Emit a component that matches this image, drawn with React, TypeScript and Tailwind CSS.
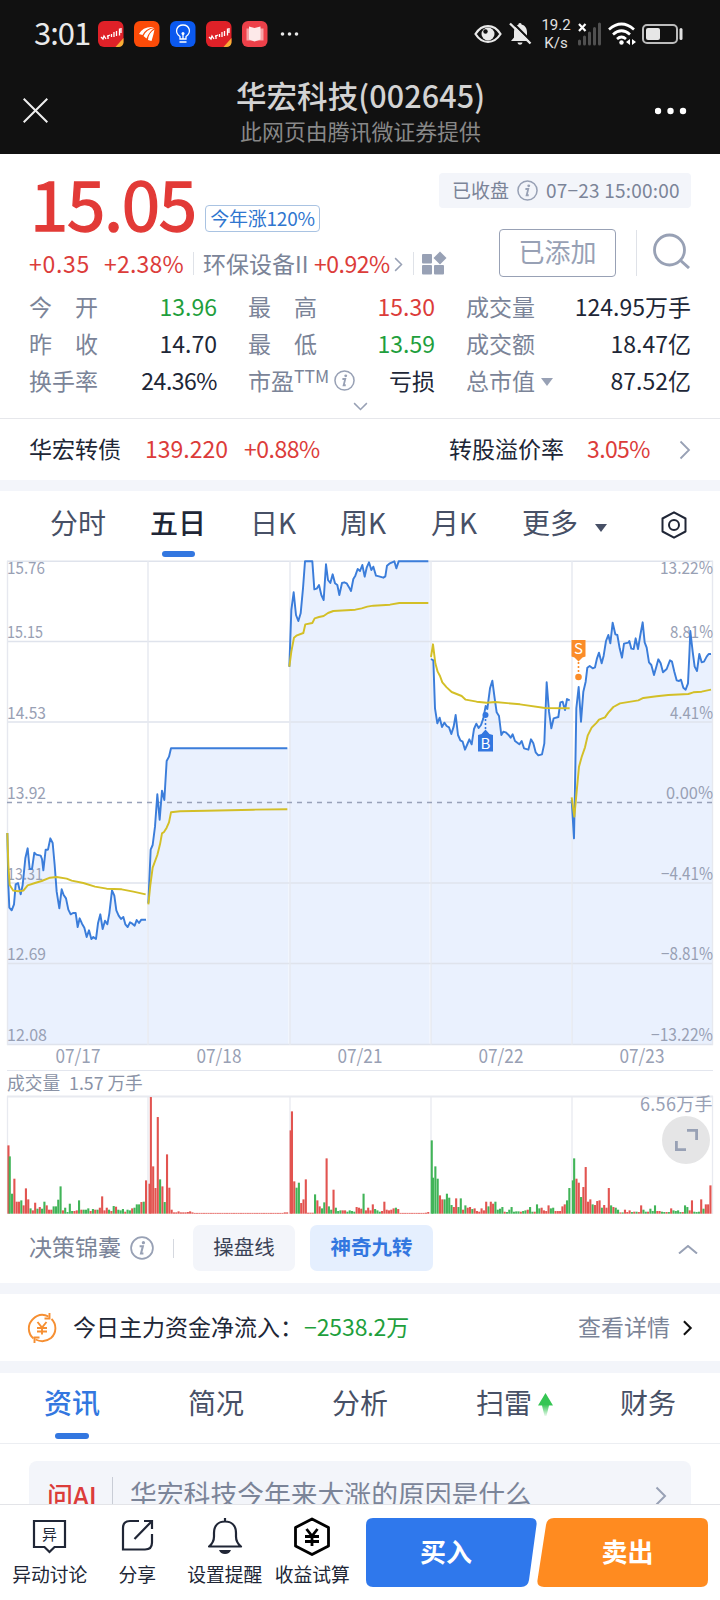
import React from 'react';
import { clsx } from 'clsx';

// Chart coordinates are in thirds of a pixel, relative to each day's own origin
const DAYS = [
  {
    label: '07/17',
    x: 0,
    price:
      '22,834 25,990 28,1058 35,1066 42,1048 47,988 54,984 62,1018 68,990 76,910 83,880 89,942 96,942 103,893 109,899 122,902 126,912 130,946 137,884 144,884 151,850 158,864 164,930 170,1010 178,1060 185,1003 191,1020 198,1030 205,1064 212,1078 219,1074 227,1074 233,1116 239,1090 246,1106 253,1118 260,1146 267,1126 274,1152 280,1146 288,1152 294,1105 301,1078 308,1122 315,1097 322,1108 328,1075 336,1006 343,1022 349,1066 356,1082 363,1092 370,1086 376,1108 383,1116 390,1102 397,1106 404,1112 410,1095 417,1104 424,1094 438,1094',
    average:
      '22,834 25,930 29,990 40,1007 55,1009 70,1007 83,991 105,984 125,978 150,968 170,966 200,971 215,977 250,984 285,995 320,1001 365,1003 400,1010 437,1018',
    volume:
      '205r 172g 60g 105r 36r 36r 40g 25r 76r 43r 16g 10r 33r 15g 20r 15g 36g 25r 12r 12r 22g 22g 42g 82g 10r 18g 5g 30g 8g 8r 10r 40g 12r 12g 12g 16g 8r 14g 12r 12g 18r 52r 10r 18r 12g 8r 23g 21r 12g 10g 14g 6r 12g 10g 16r 18g 28g 28g 35r 36g 100r',
  },
  {
    label: '07/18',
    x: 0,
    price:
      '445,1045 452,884 458,870 465,815 472,718 479,794 486,707 493,735 500,618 507,605 513,580 862,580',
    average:
      '445,1048 451,990 458,938 472,900 480,868 486,835 492,831 500,818 507,802 513,772 540,769 620,767 760,764 862,763',
    volume:
      '90r 350r 142r 77r 290r 103g 82r 35g 178r 78r 12r 4r 4r 7r 4r 4r 4r 5r 7r 4r 2r 2r 2r 1r 1r 1r 1r 1r 1r 1r 2r 2r 2r 2r 2r 1r 1r 1r 1r 1r 1r 1r 1r 1r 1r 2r 1r 1r 1r 1r 2r 1r 1r 1r 1r 2r 1r 1r 1r 4r 4r',
  },
  {
    label: '07/21',
    x: 840,
    price:
      '28,335 34,165 41,112 48,180 55,198 62,175 69,100 75,19 97,19 103,103 110,101 117,90 124,120 131,135 138,28 144,75 151,84 158,58 165,85 172,90 178,120 186,84 193,82 200,85 206,95 213,108 220,72 226,62 233,42 240,48 247,30 254,65 260,38 267,22 274,45 280,35 288,62 297,64 310,68 316,64 321,32 328,26 343,19 349,40 356,19 445,19',
    average:
      '28,335 34,290 42,248 49,242 70,234 76,208 97,204 104,190 117,186 131,183 144,174 160,168 226,164 245,160 262,155 280,152 330,149 358,144 445,144',
    volume:
      '250r 307r 97r 78g 93g 32r 43r 103r 3r 3r 3r 58g 40r 22r 16g 34g 166r 22g 12g 72r 18g 8g 10g 10r 10r 6g 10g 8g 6g 20r 18r 15r 60g 10r 18r 10r 28r 14g 10g 6g 8r 36r 12r 10r 12r 16r 18g 14r 2r 1r 1r 1r 1r 1r 1r 1r 1r 1r 1r 3r 5r',
  },
  {
    label: '07/22',
    x: 1260,
    price:
      '33,312 40,316 45,460 52,505 59,488 66,516 73,503 80,513 87,517 94,537 101,515 107,480 114,540 121,556 128,560 135,584 141,570 148,553 155,568 162,522 169,506 176,519 183,510 190,490 197,453 202,462 210,400 217,377 224,430 230,472 237,483 244,540 250,530 257,532 265,539 272,548 278,538 285,558 298,568 305,558 312,580 325,584 333,553 340,565 347,592 355,601 366,598 373,565 380,382 387,470 394,520 401,490 415,486 421,442 428,440 435,465 441,432 449,436',
    average:
      '33,306 39,268 46,325 53,350 60,363 67,382 80,397 95,411 110,417 125,423 137,434 170,440 200,443 225,441 300,448 375,459 449,460',
    volume:
      '220g 108g 142g 105g 55r 43r 43g 60g 48g 26g 20r 46r 20g 46g 12r 25g 18r 20r 14g 16r 8r 6r 16r 10r 36r 22g 36r 30r 36g 12g 15g 20g 6r 5g 12g 20g 6g 7g 7g 6r 8g 10g 12r 20g 6g 6r 28g 16g 18r 10r 8r 25r 16g 18g 8r 8r 8r 22r 28r 40g 77g',
  },
  {
    label: '07/23',
    x: 1260,
    price:
      '455,735 462,850 466,640 469,460 476,396 483,500 490,410 497,380 502,338 509,333 518,340 525,337 531,310 537,293 545,325 551,302 558,258 565,240 571,265 578,203 586,238 592,240 599,280 606,308 612,266 625,263 628,258 634,281 641,282 647,250 654,282 661,240 668,202 674,262 680,278 687,322 694,330 702,360 709,335 715,313 722,325 729,352 740,342 750,316 756,320 763,350 770,376 777,378 783,374 790,398 797,404 804,385 808,300 811,228 818,290 824,335 831,348 838,297 845,322 852,320 860,305 866,297 873,297',
    average:
      '455,727 463,785 470,710 477,635 485,606 495,577 503,542 515,518 530,503 537,494 555,487 565,473 580,456 600,445 655,436 670,429 710,424 745,420 805,417 820,412 845,410 873,404',
    volume:
      '100g 166g 105r 93r 50g 80r 140r 36r 43r 28g 26r 38r 40r 18g 26r 18r 77r 25g 20r 18g 12g 4r 4g 12r 5r 10r 5g 6r 6g 5r 25r 12g 6g 6r 15g 8g 25g 8r 8r 6g 5g 5r 5g 16r 10g 8g 10g 5g 5r 25g 20g 10r 40r 6g 5g 6g 43r 15g 28r 28r 85r',
  },
];

const GRID_X = [7.5, 148, 290, 431, 572, 712.5];
const PRICES = ['15.76', '15.15', '14.53', '13.92', '13.31', '12.69', '12.08'];
const PRICE_WIDTHS = [38, 36, 39, 39, 36, 39, 40];
const PERCENTS = ['13.22%', '8.81%', '4.41%', '0.00%', '−4.41%', '−8.81%', '−13.22%'];
const PERCENT_WIDTHS = [53, 43, 43, 47, 52, 52, 62];
const LABEL_Y = [574, 638, 719, 799, 880, 960, 1041];

function areaPath(points: string) {
  const list = points.split(' ');
  const first = list[0].split(',')[0];
  const [lastX, lastY] = list[list.length - 1].split(',');
  const end = Number(lastX) + 4;
  return `${first},1467 ${points} ${end},${lastY} ${end},1467`;
}

function PriceChart() {
  return (
    <svg className="block" width="720" height="516" viewBox="0 555 720 516">
      {DAYS.map((d) => (
        <polygon key={d.label} points={areaPath(d.price)} fill="#eaf1fe" transform={`translate(${d.x / 3} 555) scale(0.33333)`} />
      ))}
      <g stroke="#dfe3ec" strokeWidth="1.4">
        {[561.3, 641.5, 722, 883, 963.5, 1044.5].map((y) => (
          <line key={y} x1="7" x2="713" y1={y} y2={y} />
        ))}
        {GRID_X.map((x) => (
          <line key={x} x1={x} x2={x} y1="561" y2="1045" stroke="#e6e8ef" />
        ))}
      </g>
      <line x1="7" x2="713" y1="802.5" y2="802.5" stroke="#98a1b8" strokeWidth="1.6" strokeDasharray="5 5" />
      <line x1="7" x2="713" y1="1071" y2="1071" stroke="#e3e6ee" strokeWidth="2" />

      <g fill="#98a0b4" fontSize="16.6">
        {PRICES.map((p, i) => (
          <text key={p} x="7" y={LABEL_Y[i]} textLength={PRICE_WIDTHS[i]} lengthAdjust="spacingAndGlyphs">{p}</text>
        ))}
        {PERCENTS.map((p, i) => (
          <text key={p} x={713 - PERCENT_WIDTHS[i]} y={LABEL_Y[i]} textLength={PERCENT_WIDTHS[i]} lengthAdjust="spacingAndGlyphs">{p}</text>
        ))}
        {DAYS.map((d, i) => (
          <text key={d.label} x={78 + i * 141} y="1063" fontSize="18.5" textAnchor="middle" textLength="45" lengthAdjust="spacingAndGlyphs">{d.label}</text>
        ))}
      </g>

      {DAYS.map((d) => (
        <g key={d.label} transform={`translate(${d.x / 3} 555) scale(0.33333)`} fill="none" strokeWidth="5.8" strokeLinejoin="round">
          <polyline points={d.price} stroke="#3b7dda" />
          <polyline points={d.average} stroke="#d3bf27" />
        </g>
      ))}

      {/* trade markers */}
      <circle cx="485.5" cy="715" r="3" fill="#3377e0" />
      <path d="M485.5 719v11" stroke="#3377e0" strokeWidth="1.6" strokeDasharray="2 2" />
      <path d="M478 735l3.5-1 4-4.5 4 4.5 3.5 1v16.500h-15z" fill="#3377e0" />
      <text x="485.5" y="749" fill="#fff" fontSize="15" textAnchor="middle">B</text>
      <path d="M571.5 640h14v16.500l-3 1-4 4-4-4-3-1z" fill="#fb8c28" />
      <text x="578.5" y="654" fill="#fff" fontSize="15" textAnchor="middle">S</text>
      <path d="M578.5 662v11" stroke="#fb8c28" strokeWidth="1.6" strokeDasharray="2 2" />
      <circle cx="578.5" cy="677" r="3.3" fill="#fb8c28" />
    </svg>
  );
}

function VolumeChart() {
  return (
    <svg className="block" width="720" height="119" viewBox="0 1095 720 119">
      <line x1="7" x2="713" y1="1096.5" y2="1096.5" stroke="#e8eaf0" strokeWidth="2" />
      {GRID_X.map((x) => (
        <line key={x} x1={x} x2={x} y1="1096" y2="1214" stroke="#e8eaf0" strokeWidth="1.3" />
      ))}
      {DAYS.map((d, day) =>
        d.volume.split(' ').map((v, i) => {
          const h = Math.max(parseInt(v, 10) / 3, 0.8);
          const x = 7.4 + day * 141.1 + i * 2.31 - (i ? 1 : 0);
          return (
            <rect key={`${day}-${i}`} x={x} y={1213.7 - h} width="2.1" height={h} fill={v.endsWith('r') ? '#e25450' : '#41b458'} />
          );
        }),
      )}
      <text x="712.5" y="1110.5" fill="#98a0b4" fontSize="18" textAnchor="end" textLength="72.5">6.56万手</text>
    </svg>
  );
}

function InfoIcon({ className }: { className?: string }) {
  return (
    <svg className={className} viewBox="0 0 22 22" fill="none">
      <circle cx="11" cy="11" r="10" stroke="#98a1b5" strokeWidth="1.6" />
      <circle cx="12.3" cy="6.1" r="1.5" fill="#98a1b5" />
      <path d="M8.8 9.4h3l-1.700 6.600h2.200" stroke="#98a1b5" strokeWidth="1.900" />
    </svg>
  );
}

function Chevron({ className, color = '#98a1b5', width = 2 }: { className?: string; color?: string; width?: number }) {
  return (
    <svg className={className} viewBox="0 0 12 20" fill="none">
      <path d="M1.5 1.5L10 10l-8.500 8.500" stroke={color} strokeWidth={width} />
    </svg>
  );
}

function StockApp() {
  return (
    <svg className="size-[26px]" viewBox="0 0 26 26">
      <rect width="25.5" height="26" rx="6" fill="#df2128" />
      <path d="M25.5 17v5q-1 4-5 4h-3z" fill="#f9ae35" />
      <path d="M3 16l2 2 1-3 2 3M9 15.500l3-1.500M10 14v4M13.500 13v3M16 11v5M18.500 10v5M21.500 7.500v7M23 7v5" stroke="#fff" strokeWidth="1.3" fill="none" />
    </svg>
  );
}

function StatusBar() {
  return (
    <div className="flex h-[68px] items-center pl-[34px]">
      <span className="mt-[-5px] w-[64px] text-[31px] leading-none tracking-[-1px] text-[#e9e9e9]">3:01</span>
      <div className="flex gap-[10px]">
        <StockApp />
        <svg className="size-[26px]" viewBox="0 0 26 26">
          <rect width="25.5" height="26" rx="6" fill="#fc4b08" />
          <path d="M5 13Q9 5 20 6Q11 8 8.500 14zM9.500 15Q12 8.500 20.500 7Q15 10.500 12.500 17.500zM14 19Q14.500 12 20.500 8.500Q19.500 14 17.500 20z" fill="#fff" />
        </svg>
        <svg className="size-[26px]" viewBox="0 0 26 26" fill="none">
          <rect width="25.5" height="26" rx="6" fill="#0b59ef" />
          <path d="M10 18v-2.500c-6-4-3.500-11.500 3-11.500s9 7.500 3 11.500V18zM9.500 21h7M13 13v5" stroke="#fff" strokeWidth="1.3" />
          <circle cx="13" cy="12.5" r="1.5" fill="#fff" />
        </svg>
        <StockApp />
        <svg className="size-[26px]" viewBox="0 0 26 26">
          <rect width="25.5" height="26" rx="6" fill="#ed4049" />
          <path d="M4.5 7.500h17v12h-17z" fill="#f8a3a6" />
          <path d="M7 5.500l5.500 1.500L18.500 5.500v13l-6 2-5.500-2z" fill="#fde9e9" />
        </svg>
      </div>
      <svg className="ml-[12px] h-[26px] w-[20px]" viewBox="0 0 20 26" fill="#e9e9e9">
        <circle cx="2.5" cy="13" r="1.8" />
        <circle cx="9.5" cy="13" r="1.8" />
        <circle cx="16.5" cy="13" r="1.8" />
      </svg>
      <svg className="ml-[174px] h-[24px] w-[28px]" viewBox="0 0 28 24" fill="none">
        <path d="M1.500 12C8 1.500 20 1.500 26.500 12C20 22.500 8 22.500 1.500 12z" stroke="#e9e9e9" strokeWidth="2.200" />
        <circle cx="14" cy="12" r="6.5" fill="#e9e9e9" />
        <circle cx="11.5" cy="9.5" r="2.2" fill="#111" />
      </svg>
      <svg className="ml-[7px] h-[24px] w-[23px]" viewBox="0 0 23 24">
        <path d="M11 1c1.300 0 1.500 1 1.500 1.500 4 1 5.500 4 5.500 8v5l2.500 3.500H2l3-3.500v-5C5 6 7 3.500 9.500 2.500 9.500 2 9.700 1 11 1zM8.500 20.500h5c-.5 3-4.500 3-5 0z" fill="#e9e9e9" />
        <path d="M2 -1L23.500 20.500" stroke="#111" strokeWidth="2.200" />
        <path d="M1 1.500L21.500 21.500" stroke="#e9e9e9" strokeWidth="2.400" />
      </svg>
      <div className="ml-[7px] w-[34px] text-center font-['Roboto'] text-[15px] leading-[18px] text-[#e2e2e2]">
        19.2
        <br />
        K/s
      </div>
      <svg className="ml-[4px] h-[24px] w-[26px]" viewBox="0 0 26 24">
        <path d="M2.500 22v-3M7.500 22v-7M12.500 22v-11M17.500 22V6.500M22.500 22V2" stroke="#505050" strokeWidth="3" strokeLinecap="round" />
        <path d="M2 2l6.500 7M8.500 2L2 9" stroke="#fff" strokeWidth="2.200" />
      </svg>
      <svg className="ml-[5px] h-[24px] w-[28px]" viewBox="0 0 28 24" fill="none">
        <path d="M1 7.500Q13.500-3.500 26 7.500M5 12.500Q13.500 5 22 12.500M9 17Q13.500 13 18 17" stroke="#fff" strokeWidth="2.700" />
        <circle cx="13.500" cy="20.500" r="2.200" fill="#fff" />
        <path d="M22 17v6l-4-3zM24 17v6l4-3z" fill="#fff" />
      </svg>
      <svg className="ml-[6px] h-[24px] w-[42px]" viewBox="0 0 42 24" fill="none">
        <rect x="1" y="3" width="34" height="18" rx="4" stroke="#bcbcbc" strokeWidth="2" />
        <rect x="4" y="6" width="14" height="12" rx="2" fill="#e6e6e6" />
        <path d="M39 7.500v9" stroke="#e0e0e0" strokeWidth="3" strokeLinecap="round" />
      </svg>
    </div>
  );
}

function Header() {
  return (
    <header className="h-[154px] bg-[#111]">
      <StatusBar />
      <div className="flex h-[86px] items-start px-[23px]">
        <svg className="mt-[30px] size-[25px]" viewBox="0 0 25 25">
          <path d="M.7.7l23.600 23.600M24.300.7L.7 24.300" stroke="#eee" strokeWidth="2" />
        </svg>
        <div className="ml-[18px] flex-1 pt-[7px] text-center">
          <h1 className="text-[30.500px] leading-[40px] font-medium tracking-[0.100px] text-[#d3d3d3]">华宏科技(002645)</h1>
          <p className="mt-px text-[21.900px] leading-[30px] text-[#888]">此网页由腾讯微证券提供</p>
        </div>
        <svg className="mt-[38px] mr-[10px] h-[9px] w-[32px]" viewBox="0 0 32 9" fill="#fff">
          <circle cx="3" cy="5" r="3.200" />
          <circle cx="15.500" cy="5" r="3.200" />
          <circle cx="28" cy="5" r="3.200" />
        </svg>
      </div>
    </header>
  );
}

const STATS = [
  { label: '今开', value: '13.96', color: 'text-[#1f9f3d]' },
  { label: '最高', value: '15.30', color: 'text-[#dc3c3a]' },
  { label: '成交量', value: '124.95万手', color: 'text-[#202636]' },
  { label: '昨收', value: '14.70', color: 'text-[#202636]' },
  { label: '最低', value: '13.59', color: 'text-[#1f9f3d]' },
  { label: '成交额', value: '18.47亿', color: 'text-[#202636]' },
  { label: '换手率', value: '24.36%', color: 'text-[#202636] tracking-[-0.500px]' },
  { label: '市盈', value: '亏损', color: 'text-[#202636]', ttm: true },
  { label: '总市值', value: '87.52亿', color: 'text-[#202636]', arrow: true },
];

function Quote() {
  return (
    <section className="h-[265px] border-b border-[#e6e7eb]">
      <div className="flex h-[134px] justify-between px-[29px]">
        <div className="w-[400px] shrink-0">
          <div className="flex h-[86px] items-start">
            <span className="mt-[13px] ml-[1px] w-[175px] text-[69px] leading-[68px] tracking-[-1.300px] text-[#e23a37] [-webkit-text-stroke:1.300px_#e23a37]">15.05</span>
            <span className="mt-[51px] flex h-[27px] w-[115px] shrink-0 items-center justify-center rounded-[4px] border border-[#a9c3e2] pb-px text-[19px] tracking-[-0.200px] whitespace-nowrap text-[#2f76cf]">
              今年涨120%
            </span>
          </div>
          <div className="flex h-[46px] items-center text-[23px] leading-[30px] whitespace-nowrap text-[#dc3c3a]">
            <span className="w-[75px] shrink-0 tracking-[0.700px]">+0.35</span>
            <span className="w-[89px] shrink-0 tracking-[0.200px]">+2.38%</span>
            <span className="h-[23px] w-px shrink-0 bg-[#dfe2e8]" />
            <span className="ml-[9px] w-[111px] shrink-0 text-[#7b8498]">环保设备II</span>
            <span className="w-[80px] shrink-0 tracking-[-0.500px]">+0.92%</span>
            <Chevron className="mt-[3px] h-[15px] w-[9px] shrink-0" />
            <span className="mr-[8px] ml-[10px] h-[23px] w-px shrink-0 bg-[#dfe2e8]" />
            <svg className="h-[24px] w-[25px] shrink-0" viewBox="0 0 25 24" fill="#98a1b5">
              <rect y="3" width="10" height="9.5" rx="1" />
              <rect y="14" width="10" height="9.5" rx="1" />
              <rect x="12" y="14" width="10" height="9.5" rx="1" />
              <path d="M18 .5l6.500 6.500-6.500 6.500-6.500-6.500z" />
            </svg>
          </div>
        </div>
        <div className="flex flex-col items-end pt-[19px]">
          <div className="flex h-[35px] w-[252px] items-center rounded-[4px] bg-[#f3f5fa] pb-px pl-[13px] text-[19px] whitespace-nowrap text-[#7b8498]">
            已收盘
            <InfoIcon className="mx-[8px] size-[21px] shrink-0" />
            <span className="tracking-[0.200px]">07−23 15:00:00</span>
          </div>
          <div className="mt-[21px] flex h-[48px] items-center">
            <button className="h-[48px] w-[117px] rounded-[4px] border border-[#98a1b5] pb-[4px] text-[26px] leading-none text-[#98a1b5]">已添加</button>
            <span className="ml-[20px] h-[46px] w-px bg-[#dfe2e8]" />
            <svg className="mr-px ml-[16px] mt-[-4px] h-[36px] w-[37px]" viewBox="0 0 37 36" fill="none">
              <circle cx="16.5" cy="17" r="15" stroke="#98a1b5" strokeWidth="2.800" />
              <path d="M27 27l9 8" stroke="#98a1b5" strokeWidth="3" />
            </svg>
          </div>
        </div>
      </div>
      <div className="grid grid-cols-[188px_187px_225px] gap-x-[31px] px-[29px] text-[23px]">
        {STATS.map((s) => (
          <div key={s.label} className="flex h-[37px] items-center justify-between whitespace-nowrap">
            <div className="flex items-center text-[#7b8498]">
              {s.label.length === 2 && !s.ttm ? (
                <span className="flex w-[69px] justify-between">
                  <span>{s.label[0]}</span>
                  <span>{s.label[1]}</span>
                </span>
              ) : (
                s.label
              )}
              {s.ttm && (
                <>
                  <span className="-mt-[9px] text-[17.500px]">TTM</span>
                  <InfoIcon className="ml-[5px] size-[21px]" />
                </>
              )}
              {s.arrow && <span className="mt-[2px] ml-[6px] border-x-[6px] border-t-[8px] border-x-transparent border-t-[#98a1b5]" />}
            </div>
            <span className={s.color}>{s.value}</span>
          </div>
        ))}
      </div>
      <div className="flex h-[14px] items-center justify-center">
        <Chevron className="h-[15px] w-[9px] rotate-90" />
      </div>
    </section>
  );
}

function BondRow() {
  return (
    <section className="flex h-[61px] items-center px-[29px] pb-[2px] text-[23px] whitespace-nowrap text-[#202636]">
      <span className="w-[116px]">华宏转债</span>
      <span className="w-[99px] text-[#dc3c3a]">139.220</span>
      <span className="tracking-[-0.500px] text-[#dc3c3a]">+0.88%</span>
      <span className="ml-auto">转股溢价率</span>
      <span className="ml-[23px] w-[92px] tracking-[-0.600px] text-[#dc3c3a]">3.05%</span>
      <Chevron className="mt-[2px] h-[20px] w-[12px]" width={1.8} />
    </section>
  );
}

const PERIODS = [
  { label: '分时', width: 'w-[100px]' },
  { label: '五日', width: 'w-[100px]' },
  { label: '日K', width: 'w-[90px]' },
  { label: '周K', width: 'w-[91px]' },
  { label: '月K', width: 'w-[91px]' },
  { label: '更多', width: 'w-[72px]' },
];

function PeriodTabs() {
  return (
    <nav className="flex h-[64px] pl-[50px] text-[28px] whitespace-nowrap text-[#475066]">
      {PERIODS.map((p) => {
        const active = p.label === '五日';
        return (
          <div key={p.label} className={clsx(p.width, 'flex flex-col', active && 'font-medium text-[#202636]')}>
            <span className="h-[60px] leading-[63px]">{p.label}</span>
            {active && <span className="ml-[12px] h-[6px] w-[33px] shrink-0 rounded-full bg-[#3377e0]" />}
          </div>
        );
      })}
      <span className="mt-[33px] ml-px h-0 border-x-[6px] border-t-[8px] border-x-transparent border-t-[#475066]" />
      <svg className="mt-[20px] ml-[54px] h-[28px] w-[26px]" viewBox="0 0 26 28" fill="none" stroke="#202636" strokeWidth="2">
        <path d="M13 1.300l11.500 6.200v13L13 26.700 1.500 20.500v-13z" strokeLinejoin="round" />
        <circle cx="13" cy="14" r="5" />
      </svg>
    </nav>
  );
}

const SECTIONS = ['资讯', '简况', '分析', '扫雷', '财务'];

function SectionTabs() {
  return (
    <nav className="flex h-[71px] justify-between border-b border-[#eceef2] pr-[43px] pl-[44px] text-[28px] whitespace-nowrap text-[#475066]">
      {SECTIONS.map((s, i) => (
        <div key={s} className={clsx('relative flex w-[57px] flex-col', i === 0 && 'font-medium text-[#3377e0]')}>
          <span className="h-[60px] leading-[59px]">{s}</span>
          {i === 0 && <span className="ml-[11px] h-[6px] w-[34px] rounded-full bg-[#3377e0]" />}
          {s === '扫雷' && (
            <svg className="absolute top-[20px] left-[62px] h-[24px] w-[15px]" viewBox="0 0 15 24">
              <defs>
                <linearGradient id="rise" x1="0" y1="0" x2="0" y2="1">
                  <stop offset=".5" stopColor="#35c553" />
                  <stop offset="1" stopColor="#35c553" stopOpacity=".1" />
                </linearGradient>
              </defs>
              <path d="M7.500 0l7.500 12.500h-4l-2.500 10.500h-2l-2.500-10.500H0z" fill="url(#rise)" />
            </svg>
          )}
        </div>
      ))}
    </nav>
  );
}

function NavItem({ label, children }: { label: string; children: React.ReactNode }) {
  return (
    <div className="flex w-[87.500px] flex-col items-center whitespace-nowrap">
      <svg className="h-[42px] w-[40px]" viewBox="0 0 40 42" fill="none" stroke="#202636" strokeWidth="2.200">
        {children}
      </svg>
      <span className="mt-[2px] text-[18.800px] leading-[28px] text-[#202636]">{label}</span>
    </div>
  );
}

function BottomBar() {
  return (
    <footer className="flex h-[96px] border-t border-[#e3e4e8] bg-white pt-[11px] pl-[6px]">
      <NavItem label="异动讨论">
        <path d="M4 5h31v26H24.500l-5 5-5-5H4z" />
        <text x="19.5" y="24" fontSize="15" textAnchor="middle" fill="#202636" stroke="none">异</text>
      </NavItem>
      <NavItem label="分享">
        <path d="M22 5H13Q6 5 6 12v21.500h22q7 0 7-7V18M17.500 23L34.500 5.500M27 5h8v8" />
      </NavItem>
      <NavItem label="设置提醒">
        <path d="M4 30.500q5-4 5-10V17C9 9 14 5.500 20 5.500S31 9 31 17v3.500q0 6 5 10zM20 2v4" strokeLinejoin="round" />
        <path d="M14 34h12q-1.500 4-6 4t-6-4z" fill="#202636" stroke="none" />
      </NavItem>
      <NavItem label="收益试算">
        <g stroke="#000" strokeWidth="2.800">
          <path d="M20 3l16.500 8.500v18.500l-16.500 8.500L3.500 30V11.500z" strokeLinejoin="round" />
          <path d="M14.500 13l5.500 7 5.500-7M20 20v10M13 20.500h14M13 25.500h14" />
        </g>
      </NavItem>
      <button className="relative mt-[2px] ml-[10px] h-[69px] w-[171px] pr-[11px] pb-[4px] text-[26px] font-bold text-white">
        <svg className="absolute inset-0" width="171" height="69" viewBox="0 0 171 69">
          <path d="M7 0h157q7.500 0 6.500 7l-7.500 55q-1 7-8 7H7q-7 0-7-7V7q0-7 7-7z" fill="#2f78ec" />
        </svg>
        <span className="relative">买入</span>
      </button>
      <button className="relative mt-[2px] h-[69px] w-[171px] pb-[4px] pl-[10px] text-[26px] font-bold text-white">
        <svg className="absolute inset-0" width="171" height="69" viewBox="0 0 171 69">
          <path d="M17 0h147q7 0 7 7v55q0 7-7 7H7q-7.500 0-6.500-7L9 7q1-7 8-7z" fill="#ff8b20" />
        </svg>
        <span className="relative">卖出</span>
      </button>
    </footer>
  );
}

export default function App() {
  return (
    <div className="h-[1600px] w-[720px] overflow-hidden bg-white font-['Noto_Sans_CJK_SC',sans-serif]">
      <Header />
      <Quote />
      <BondRow />
      <div className="h-[11px] bg-[#f3f5fa]" />
      <PeriodTabs />
      <PriceChart />
      <div className="flex h-[24px] items-center pb-[2px] pl-[7px] text-[17.700px] whitespace-nowrap text-[#8a92a5]">
        成交量<span className="ml-[9px]">1.57 万手</span>
      </div>
      <div className="relative">
        <VolumeChart />
        <div className="absolute top-[21px] left-[662px] flex size-[48px] items-center justify-center rounded-full bg-[#e5e5e6]">
          <svg width="24" height="24" viewBox="0 0 24 24" fill="none" stroke="#98a1b5" strokeWidth="2.800">
            <path d="M13 2.400h9.600V12M2.400 13v8.600H12" />
          </svg>
        </div>
      </div>

      <section className="flex h-[69px] items-center px-[29px] pb-px whitespace-nowrap">
        <span className="mt-[-3px] text-[23px] text-[#7b8498]">决策锦囊</span>
        <InfoIcon className="ml-[9px] size-[24px]" />
        <span className="ml-[19px] h-[19px] w-px bg-[#d5d8df]" />
        <button className="ml-[19px] h-[46px] w-[102px] rounded-[7px] bg-[#f3f5fa] pb-[3px] text-[20.500px] text-[#3a4256]">操盘线</button>
        <button className="ml-[15px] h-[46px] w-[123px] rounded-[7px] bg-[#e5effe] pb-[3px] text-[20.500px] font-bold text-[#3377e0]">神奇九转</button>
        <svg className="mt-[3px] mr-[-7px] ml-auto h-[9px] w-[20px]" viewBox="0 0 20 9" fill="none">
          <path d="M1 8.500L10 1l9 7.500" stroke="#98a1b5" strokeWidth="2" />
        </svg>
      </section>
      <div className="h-[11px] bg-[#f3f5fa]" />

      <section className="flex h-[67px] items-center px-[27px] pb-[2px] text-[23px] whitespace-nowrap text-[#202636]">
        <svg className="mt-[3px] size-[30px]" viewBox="0 0 30 30" fill="none" stroke="#f68f32" strokeWidth="1.900">
          <path d="M6.500 25.500A13 13 0 0 1 6 6Q13-1 21.500 3.500M24.500 6A13 13 0 0 1 24 25Q17 30.500 8.500 26.500" />
          <path d="M17.500 5.500h5V0M12.500 24.500h-5V30" />
          <path d="M10.500 9l4.500 5.500L19.500 9M15 14.500v7M10 15h10M10 18.500h10" />
        </svg>
        <span className="ml-[16px] w-[231px]">今日主力资金净流入：</span>
        <span className="tracking-[-0.100px] text-[#1f9f3d]">−2538.2万</span>
        <span className="ml-auto text-[#7b8498]">查看详情</span>
        <Chevron className="mt-[2px] ml-[12px] h-[16px] w-[11px]" color="#111" width={2.6} />
      </section>
      <div className="h-[12px] bg-[#f3f5fa]" />

      <SectionTabs />
      <div className="mx-[29px] mt-[17px] h-[43px] overflow-hidden rounded-t-[8px] bg-[#f3f5fa]">
        <div className="flex h-[66px] items-center pr-[24px] pl-[18px] whitespace-nowrap">
          <span className="w-[65px] text-[26px] font-medium tracking-[-0.200px] text-[#dc3c3a]">问AI</span>
          <span className="h-[34px] w-px bg-[#c9cdd6]" />
          <span className="ml-[17px] text-[26.800px] text-[#7b8498]">华宏科技今年来大涨的原因是什么</span>
          <Chevron className="mt-[3px] ml-auto h-[20px] w-[12px]" />
        </div>
      </div>
      <BottomBar />
    </div>
  );
}
